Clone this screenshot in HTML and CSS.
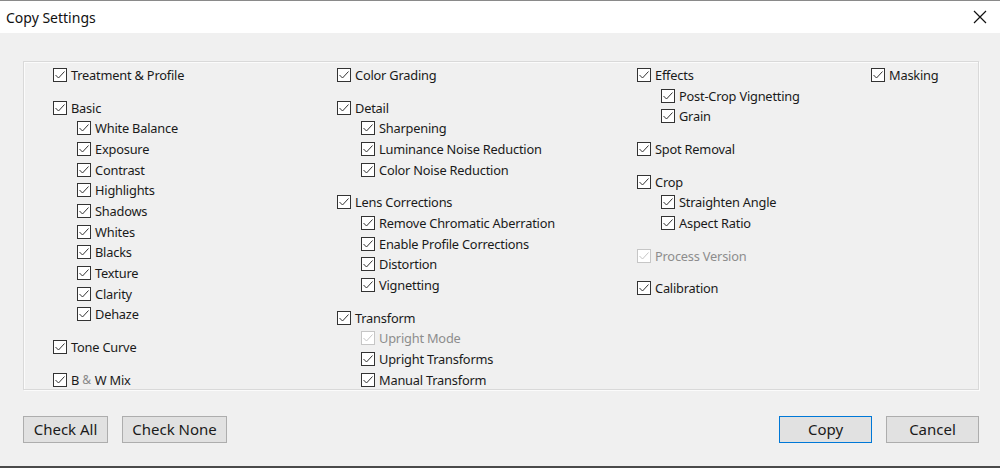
FILE: index.html
```html
<!DOCTYPE html>
<html>
<head>
<meta charset="utf-8">
<link rel="stylesheet" href="styles.css">
</head>
<body>
<div class="window">
  <div class="titlebar">
    <span class="title">Copy Settings</span>
    <svg class="close" width="14" height="14" viewBox="0 0 14 14"><path d="M1 1 L13 13 M13 1 L1 13" stroke="#111" stroke-width="1.2" fill="none"/></svg>
  </div>
  <div class="content">
    <div class="panel">
      <div class="col c1">
        <div class="group"><div class="row"><i class="cb"></i>Treatment &amp; Profile</div></div>
        <div class="group">
          <div class="row"><i class="cb"></i>Basic</div>
          <div class="row sub"><i class="cb"></i>White Balance</div>
          <div class="row sub"><i class="cb"></i>Exposure</div>
          <div class="row sub"><i class="cb"></i>Contrast</div>
          <div class="row sub"><i class="cb"></i>Highlights</div>
          <div class="row sub"><i class="cb"></i>Shadows</div>
          <div class="row sub"><i class="cb"></i>Whites</div>
          <div class="row sub"><i class="cb"></i>Blacks</div>
          <div class="row sub"><i class="cb"></i>Texture</div>
          <div class="row sub"><i class="cb"></i>Clarity</div>
          <div class="row sub"><i class="cb"></i>Dehaze</div>
        </div>
        <div class="group"><div class="row"><i class="cb"></i>Tone Curve</div></div>
        <div class="group"><div class="row"><i class="cb"></i>B<span class="amp">&amp;</span>W Mix</div></div>
      </div>
      <div class="col c2">
        <div class="group"><div class="row"><i class="cb"></i>Color Grading</div></div>
        <div class="group">
          <div class="row"><i class="cb"></i>Detail</div>
          <div class="row sub"><i class="cb"></i>Sharpening</div>
          <div class="row sub"><i class="cb"></i>Luminance Noise Reduction</div>
          <div class="row sub"><i class="cb"></i>Color Noise Reduction</div>
        </div>
        <div class="group">
          <div class="row"><i class="cb"></i>Lens Corrections</div>
          <div class="row sub"><i class="cb"></i>Remove Chromatic Aberration</div>
          <div class="row sub"><i class="cb"></i>Enable Profile Corrections</div>
          <div class="row sub"><i class="cb"></i>Distortion</div>
          <div class="row sub"><i class="cb"></i>Vignetting</div>
        </div>
        <div class="group">
          <div class="row"><i class="cb"></i>Transform</div>
          <div class="row sub disabled"><i class="cb"></i>Upright Mode</div>
          <div class="row sub"><i class="cb"></i>Upright Transforms</div>
          <div class="row sub"><i class="cb"></i>Manual Transform</div>
        </div>
      </div>
      <div class="col c3">
        <div class="group">
          <div class="row"><i class="cb"></i>Effects</div>
          <div class="row sub"><i class="cb"></i>Post-Crop Vignetting</div>
          <div class="row sub"><i class="cb"></i>Grain</div>
        </div>
        <div class="group"><div class="row"><i class="cb"></i>Spot Removal</div></div>
        <div class="group">
          <div class="row"><i class="cb"></i>Crop</div>
          <div class="row sub"><i class="cb"></i>Straighten Angle</div>
          <div class="row sub"><i class="cb"></i>Aspect Ratio</div>
        </div>
        <div class="group"><div class="row disabled"><i class="cb"></i>Process Version</div></div>
        <div class="group"><div class="row"><i class="cb"></i>Calibration</div></div>
      </div>
      <div class="col c4">
        <div class="group"><div class="row"><i class="cb"></i>Masking</div></div>
      </div>
    </div>
    <div class="buttons">
      <div class="left">
        <button class="btn w85">Check All</button>
        <button class="btn w105">Check None</button>
      </div>
      <div class="right">
        <button class="btn w93 default">Copy</button>
        <button class="btn w93">Cancel</button>
      </div>
    </div>
  </div>
</div>
</body>
</html>
```

FILE: styles.css
```css
html, body {
  margin: 0;
  padding: 0;
  background: #f0f0f0;
}
body {
  font-family: "Noto Sans", "Open Sans", sans-serif;
  color: #1a1a1a;
}
.window {
  width: 1000px;
  height: 468px;
  box-sizing: border-box;
  border-top: 1px solid #8a8a8a;
  border-bottom: 2px solid #4a4a4a;
  background: #f0f0f0;
  display: flex;
  flex-direction: column;
}
.titlebar {
  height: 32px;
  background: #ffffff;
  display: flex;
  align-items: center;
  justify-content: space-between;
  padding: 0 13px 0 6px;
}
.title {
  font-size: 14px;
  color: #111;
}
.close {
  display: block;
}
.content {
  padding: 28px 21px 0 23px;
}
.panel {
  height: 329px;
  box-sizing: border-box;
  border: 1px solid #d9d9d9;
  box-shadow: inset 1px 1px 0 #fbfbfb, 1px 1px 0 #fbfbfb;
  display: grid;
  grid-template-columns: 313px 300px 234px 1fr;
  padding: 2.5px 0 0 0;
}
.c1 { padding-left: 29px; }
.group {
  margin-bottom: 12px;
}
.row {
  height: 20.7px;
  display: flex;
  align-items: center;
  font-size: 12.8px;
  white-space: nowrap;
  letter-spacing: -0.2px;
}
.row.sub {
  padding-left: 24px;
}
.cb {
  width: 14px;
  height: 14px;
  box-sizing: border-box;
  border: 1px solid #333;
  background: #fff url("data:image/svg+xml;utf8,<svg xmlns='http://www.w3.org/2000/svg' width='12' height='12' viewBox='0 0 12 12'><polyline points='1.5,6 4.5,9 10.5,2.5' fill='none' stroke='%23333' stroke-width='1'/></svg>") center/12px 12px no-repeat;
  margin-right: 4px;
  flex: none;
}
.row.disabled {
  color: #8d8d8d;
}
.row.disabled .cb {
  border-color: #c6c6c6;
  background-image: url("data:image/svg+xml;utf8,<svg xmlns='http://www.w3.org/2000/svg' width='12' height='12' viewBox='0 0 12 12'><polyline points='1.5,6 4.5,9 10.5,2.5' fill='none' stroke='%23c6c6c6' stroke-width='1'/></svg>");
}
.amp {
  color: #8a8a8a;
  font-size: 12px;
  margin: 0 4px 0 3px;
}
.buttons {
  display: flex;
  justify-content: space-between;
  margin-top: 26px;
}
.left, .right {
  display: flex;
  gap: 14px;
}
.btn {
  height: 27px;
  box-sizing: border-box;
  border: 1px solid #adadad;
  background: #e1e1e1;
  font-family: "Noto Sans", "Open Sans", sans-serif;
  font-size: 15px;
  color: #1a1a1a;
  padding: 0;
  line-height: 25px;
}
.btn.default {
  border: 1px solid #0078d7;
}
.w85 { width: 85px; }
.w105 { width: 105px; }
.w93 { width: 93px; }
```
